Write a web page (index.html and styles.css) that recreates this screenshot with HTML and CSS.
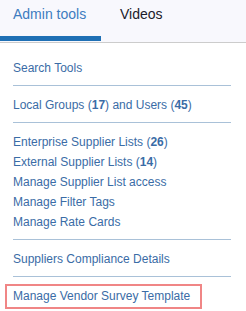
FILE: index.html
```html
<!DOCTYPE html>
<html lang="en">
<head>
    <meta charset="UTF-8">
    <title>Admin tools</title>
    <link rel="stylesheet" href="styles.css">
</head>
<body>
    <div class="tabs">
        <div class="tab active">Admin tools</div>
        <div class="tab">Videos</div>
    </div>

    <div class="tool-list">
        <div class="group">
            <a href="#">Search Tools</a>
        </div>
        <div class="group">
            <a href="#">Local Groups (<b>17</b>) and Users (<b>45</b>)</a>
        </div>
        <div class="group">
            <a href="#">Enterprise Supplier Lists (<b>26</b>)</a>
            <a href="#">External Supplier Lists (<b>14</b>)</a>
            <a href="#">Manage Supplier List access</a>
            <a href="#">Manage Filter Tags</a>
            <a href="#">Manage Rate Cards</a>
        </div>
        <div class="group">
            <a href="#">Suppliers Compliance Details</a>
        </div>
        <div class="highlight">
            <a href="#">Manage Vendor Survey Template</a>
        </div>
    </div>
</body>
</html>
```

FILE: styles.css
```css
body {
    margin: 0;
    font-family: 'Liberation Sans', Arial, sans-serif;
    background-color: #ffffff;
}

.tabs {
    display: flex;
    background-color: #f8f8fd;
    border-bottom: 1px solid #cccccc;
    height: 42px;
}

.tab {
    font-size: 14px;
    line-height: 16px;
    padding: 6px 0 0 13px;
    color: #1b1b2b;
    box-sizing: border-box;
    height: 41px;
}

.tab.active {
    width: 101px;
    color: #3d7cc0;
    border-bottom: 5px solid #1f70b5;
}

.tab + .tab {
    padding-left: 19px;
}

.tool-list {
    padding-top: 6px;
}

.tool-list a {
    display: block;
    font-size: 12px;
    line-height: 20px;
    color: #3a6ca6;
    text-decoration: none;
}

.tool-list b {
    font-weight: bold;
}

.group {
    margin: 0 15px 0 13px;
    padding: 9px 0 7px;
    border-bottom: 1px solid #a9c1d8;
}

.highlight {
    display: inline-block;
    margin: 7px 0 0 5px;
    padding: 0 10px 1px 6px;
    border: 2px solid #f08686;
}
```
